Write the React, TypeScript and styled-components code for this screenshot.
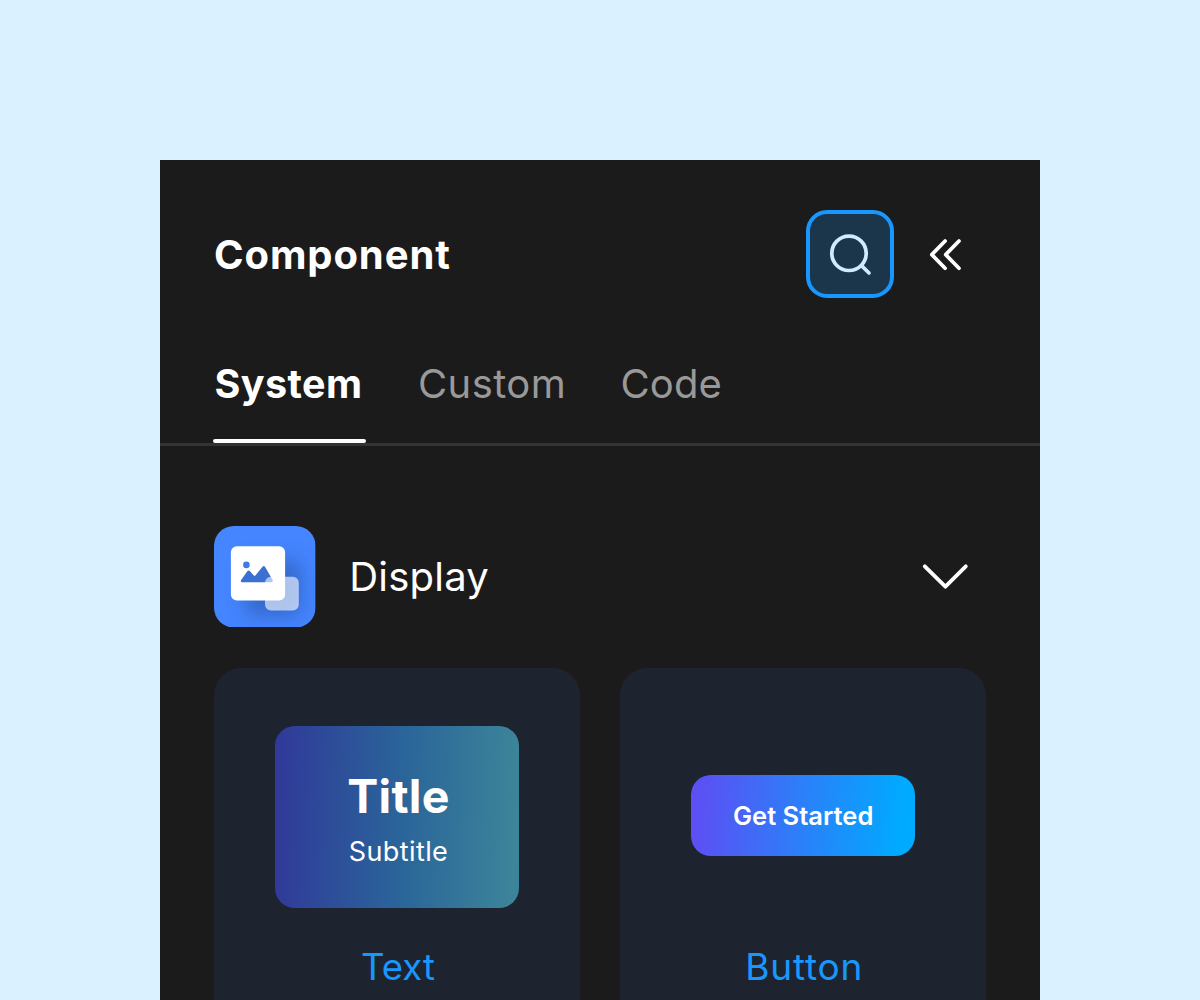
import React from "react";
import styled, { createGlobalStyle } from "styled-components";

const GlobalStyle = createGlobalStyle`
  *, *::before, *::after { box-sizing: border-box; }
  html, body { margin: 0; padding: 0; background: #daf1ff; overflow: hidden; }
  svg { display: block; flex: none; }
`;

const Page = styled.main`
  height: 1000px;
  padding: 160px 160px 0;
  overflow: hidden;
  background: #daf1ff;
  font-family: Inter, "Liberation Sans", sans-serif;
`;

const Panel = styled.section`
  width: 880px;
  height: 840px;
  overflow: hidden;
  padding-top: 50px;
  background: #1b1b1b;
`;

const Label = styled.span<{
  $size: number;
  $line: number;
  $weight?: number;
  $track?: number;
  $color?: string;
}>`
  display: block;
  margin: 0;
  white-space: nowrap;
  font-size: ${(p) => p.$size}px;
  line-height: ${(p) => p.$line}px;
  font-weight: ${(p) => p.$weight ?? 400};
  letter-spacing: ${(p) => p.$track ?? 0}px;
  color: ${(p) => p.$color ?? "#ffffff"};
`;

const Header = styled.header`
  display: flex;
  align-items: center;
  height: 88px;
  padding: 0 78px 0 54px;
`;

const HeaderTitle = styled(Label)`
  padding-top: 2px;
`;

const HeaderActions = styled.div`
  display: flex;
  align-items: center;
  gap: 34px;
  margin-left: auto;
`;

const SearchButton = styled.button`
  display: grid;
  place-items: center;
  width: 88px;
  height: 88px;
  padding: 0;
  border: 4px solid #1898ff;
  border-radius: 21px;
  background: #1b354b;
`;

const PlainButton = styled.button`
  display: grid;
  place-items: center;
  padding: 0;
  border: 0;
  background: transparent;
`;

const Tabs = styled.nav`
  display: flex;
  gap: 50px;
  height: 148px;
  padding: 62px 0 0 52.5px;
  border-bottom: 3px solid #333333;
`;

const Tab = styled.div`
  display: flex;
  flex-direction: column;
  justify-content: space-between;
  padding-left: 2px;
`;

const Underline = styled.i`
  display: block;
  width: 153.5px;
  height: 4px;
  margin-left: -2px;
  border-radius: 2px;
  background: #ffffff;
`;

const TabWidth = styled.div<{ $w: number }>`
  width: ${(p) => p.$w}px;
`;

const SectionHeader = styled.div`
  display: flex;
  align-items: center;
  gap: 33px;
  margin-top: 79.8px;
  padding: 0 71px 0 54.2px;
`;

const SectionTitle = styled(Label)`
  padding-left: 0.5px;
`;

const Toggle = styled(PlainButton)`
  margin-left: auto;
`;

const Cards = styled.div`
  display: grid;
  grid-template-columns: repeat(2, 365.6px);
  gap: 40.6px;
  margin-top: 40.6px;
  padding-left: 54.2px;
`;

const Card = styled.article`
  display: flex;
  flex-direction: column;
  align-items: center;
  height: 380px;
  padding-top: 57.6px;
  border-radius: 27px;
  background: #1d2430;
`;

const CardName = styled(Label)`
  padding-left: 2px;
`;

const Preview = styled.div`
  display: grid;
  place-items: center;
  height: 182.8px;
  margin-bottom: 35px;
`;

const TextSample = styled.div`
  display: flex;
  flex-direction: column;
  align-items: center;
  gap: 5px;
  width: 243.8px;
  height: 182.8px;
  padding: 40px 0 0 3px;
  border-radius: 20px;
  background: linear-gradient(92deg, #303b99 3%, #2a6599 52%, #3c8499 97%);
`;

const ButtonSample = styled.div`
  display: grid;
  place-items: center;
  width: 223.4px;
  height: 80.6px;
  margin-top: -3px;
  padding-top: 2px;
  border-radius: 20px;
  background: linear-gradient(93deg, #5b50f4 4%, #2b80f9 50%, #00aaff 93%);
`;

const SearchIcon = () => (
  <svg width="44" height="44" viewBox="0 0 44 44" fill="none" stroke="#d0ebff" strokeWidth="3.7" strokeLinecap="round">
    <circle cx="21" cy="21.3" r="17.2" />
    <path d="M33.5 33.7 41 41" />
  </svg>
);

const CollapseIcon = () => (
  <svg width="34" height="34" viewBox="0 0 34 34" fill="none" stroke="#ffffff" strokeWidth="3.7" strokeLinecap="round" strokeLinejoin="round">
    <path d="M17.1 4 3.8 17.6l13.3 13.6M31 4 17.7 17.6 31 31.2" />
  </svg>
);

const ChevronIcon = () => (
  <svg width="48" height="28" viewBox="0 0 48 28" fill="none" stroke="#ffffff" strokeWidth="3.8" strokeLinecap="round" strokeLinejoin="round">
    <path d="M3.8 3.3 24.4 23.7 44.8 3.3" />
  </svg>
);

const DisplayIcon = () => (
  <svg width="101.6" height="101.6" viewBox="0 0 101.6 101.6">
    <defs>
      <filter id="tileShadow" x="-60%" y="-60%" width="240%" height="240%">
        <feGaussianBlur stdDeviation="10" />
      </filter>
      <clipPath id="tile">
        <rect width="101.6" height="101.6" rx="20" />
      </clipPath>
    </defs>
    <g clipPath="url(#tile)">
      <rect width="101.6" height="101.6" fill="#4585ff" />
      <rect x="32" y="35" width="54" height="54" rx="6" fill="#234a90" opacity=".5" filter="url(#tileShadow)" />
      <rect x="16.9" y="20.2" width="54.2" height="54.2" rx="6" fill="#ffffff" />
      <circle cx="32.4" cy="38.9" r="3.3" fill="#3d7be8" />
      <path
        d="M28.5 56.2c-1.6 0-2.2-1.2-1.2-2.5l6.2-8.6q1.1-1.4 2.3 0l4 4.5q.8.9 1.6 0l7.1-8.8q1.3-1.5 2.5 0l7.4 12.7c.9 1.6.3 2.7-1.3 2.7Z"
        fill="#3b6fd2"
      />
      <rect x="51" y="50.8" width="33.8" height="33.8" rx="6" fill="#ffffff" opacity=".6" />
    </g>
  </svg>
);

export default function App() {
  return (
    <>
      <GlobalStyle />
      <Page>
        <Panel>
          <Header>
            <HeaderTitle as="h1" $size={40} $line={50} $weight={650} $track={0.9}>Component</HeaderTitle>
            <HeaderActions>
              <SearchButton aria-label="Search"><SearchIcon /></SearchButton>
              <PlainButton aria-label="Collapse"><CollapseIcon /></PlainButton>
            </HeaderActions>
          </Header>
          <Tabs>
            <Tab>
              <TabWidth $w={151.5}>
                <Label $size={39.5} $line={48} $weight={650} $track={0.4}>System</Label>
              </TabWidth>
              <Underline />
            </Tab>
            <Tab>
              <TabWidth $w={150.5}>
                <Label $size={40} $line={48} $track={0.4} $color="#999999">Custom</Label>
              </TabWidth>
            </Tab>
            <Tab>
              <Label $size={40} $line={48} $track={0.1} $color="#999999">Code</Label>
            </Tab>
          </Tabs>
          <SectionHeader>
            <DisplayIcon />
            <SectionTitle $size={40} $line={52} $track={0.2}>Display</SectionTitle>
            <Toggle aria-label="Toggle section"><ChevronIcon /></Toggle>
          </SectionHeader>
          <Cards>
            <Card>
              <Preview>
                <TextSample>
                  <Label $size={46.5} $line={61} $weight={700} $track={0.3}>Title</Label>
                  <Label $size={27} $line={40} $track={0.4}>Subtitle</Label>
                </TextSample>
              </Preview>
              <CardName $size={36.5} $line={48} $color="#1898ff">Text</CardName>
            </Card>
            <Card>
              <Preview>
                <ButtonSample>
                  <Label $size={25.5} $line={34} $weight={600}>Get Started</Label>
                </ButtonSample>
              </Preview>
              <CardName $size={37} $line={48} $track={0.8} $color="#1898ff">Button</CardName>
            </Card>
          </Cards>
        </Panel>
      </Page>
    </>
  );
}
